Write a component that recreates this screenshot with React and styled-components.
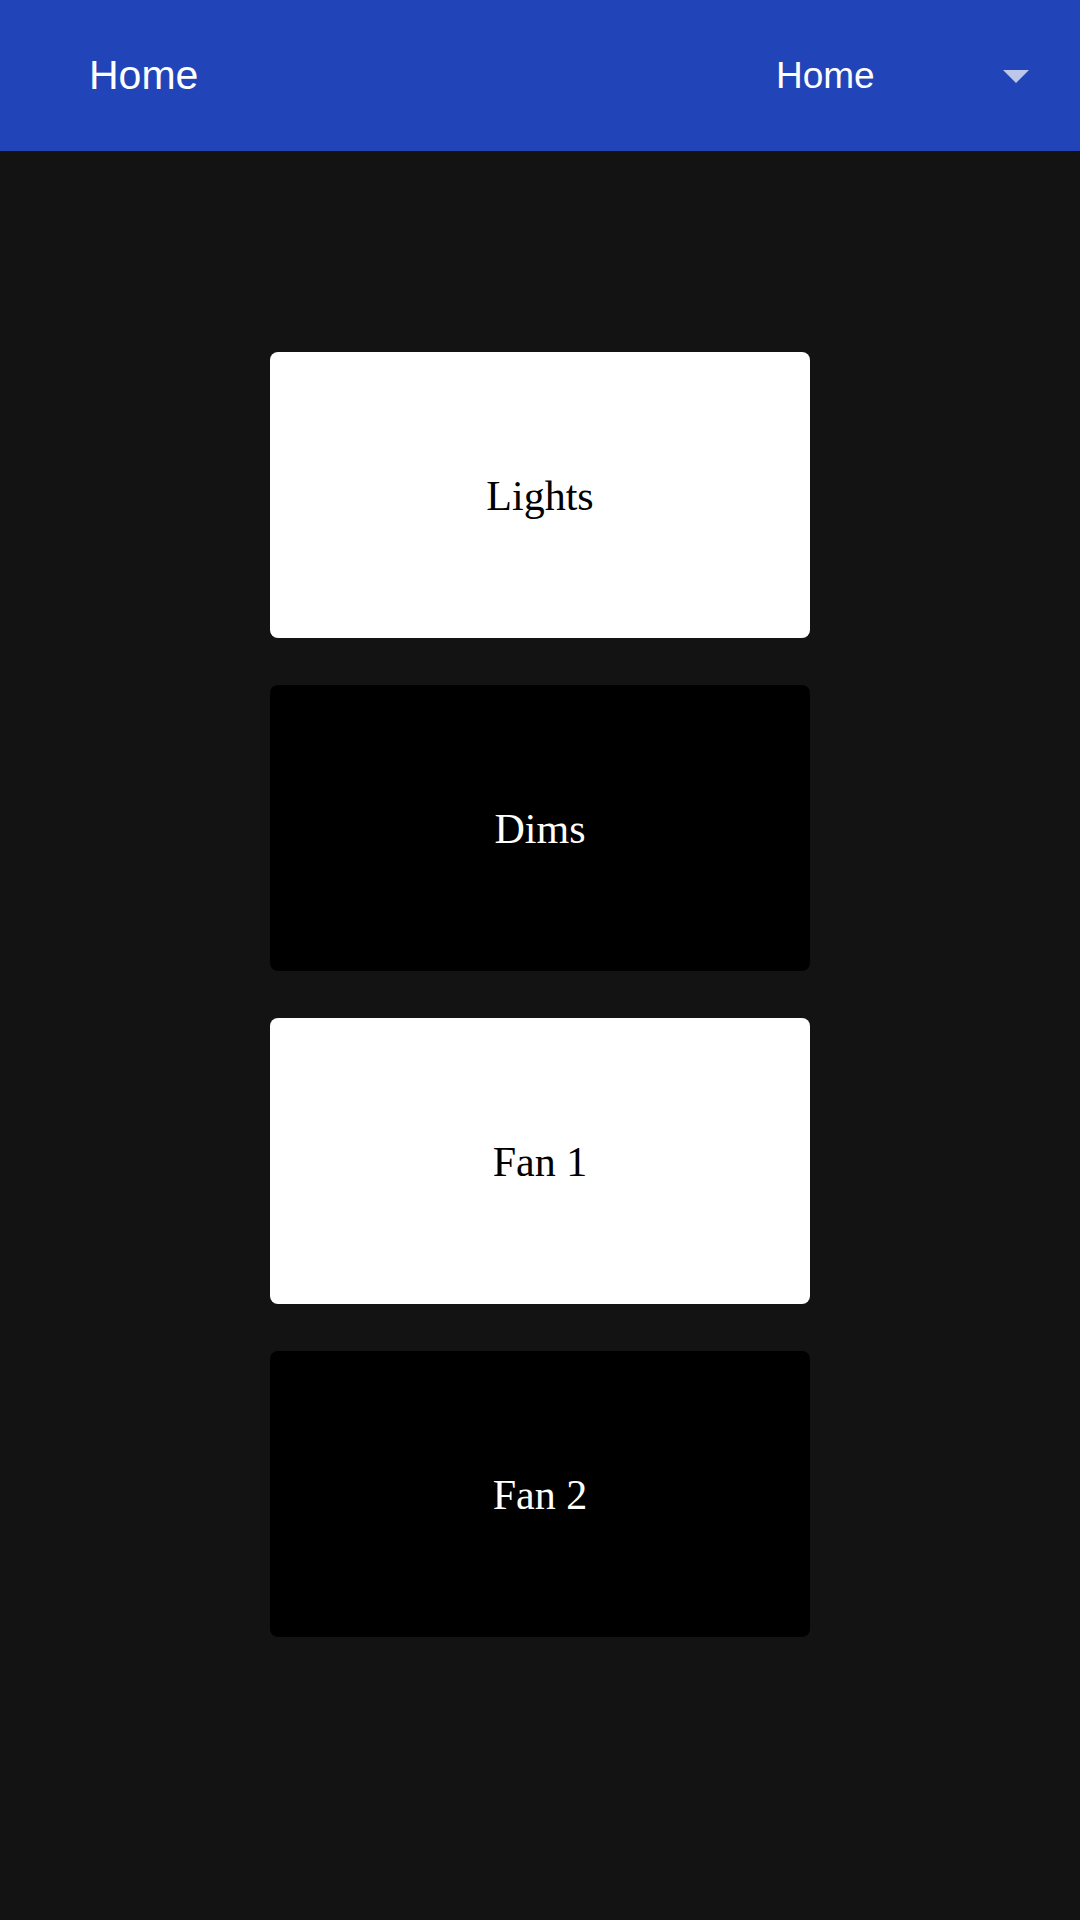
import React from 'react';
import styled, { createGlobalStyle } from 'styled-components';

const GlobalStyle = createGlobalStyle`
  html, body {
    margin: 0;
    padding: 0;
    background-color: #131313;
  }
  * {
    box-sizing: border-box;
  }
`;

const Screen = styled.div`
  width: 1080px;
  min-height: 1920px;
  background-color: #131313;
  display: flex;
  flex-direction: column;
`;

const Toolbar = styled.header`
  height: 151px;
  background-color: #2145b8;
  display: flex;
  align-items: center;
  justify-content: space-between;
  padding: 0 51px 0 89px;
`;

const Title = styled.h1`
  margin: 0;
  color: #fff;
  font-family: "Liberation Sans", sans-serif;
  font-weight: 400;
  font-size: ${(p) => p.size}px;
  line-height: 1;
`;

const Spinner = styled.div`
  display: flex;
  align-items: center;
  justify-content: space-between;
  width: 253px;
`;

const Arrow = styled.div`
  width: 0;
  height: 0;
  border-left: 13.5px solid transparent;
  border-right: 13.5px solid transparent;
  border-top: 13px solid rgba(255, 255, 255, 0.7);
  margin-top: 2px;
`;

const List = styled.main`
  display: flex;
  flex-direction: column;
  align-items: center;
  gap: 47px;
  padding-top: 201px;
`;

const Tile = styled.button`
  width: 540px;
  height: 286px;
  border: none;
  border-radius: 8px;
  background-color: ${(p) => (p.on ? '#ffffff' : '#000000')};
  color: ${(p) => (p.on ? '#000000' : '#ffffff')};
  font-family: "Liberation Serif", serif;
  font-size: 42px;
  padding-top: 2px;
  display: flex;
  align-items: center;
  justify-content: center;
  cursor: pointer;
`;

const devices = [
  { name: 'Lights', on: true },
  { name: 'Dims', on: false },
  { name: 'Fan 1', on: true },
  { name: 'Fan 2', on: false },
];

function App() {
  return (
    <Screen>
      <GlobalStyle />
      <Toolbar>
        <Title size={41}>Home</Title>
        <Spinner>
          <Title size={37}>Home</Title>
          <Arrow />
        </Spinner>
      </Toolbar>
      <List>
        {devices.map((d) => (
          <Tile key={d.name} on={d.on}>
            {d.name}
          </Tile>
        ))}
      </List>
    </Screen>
  );
}

export default App;
